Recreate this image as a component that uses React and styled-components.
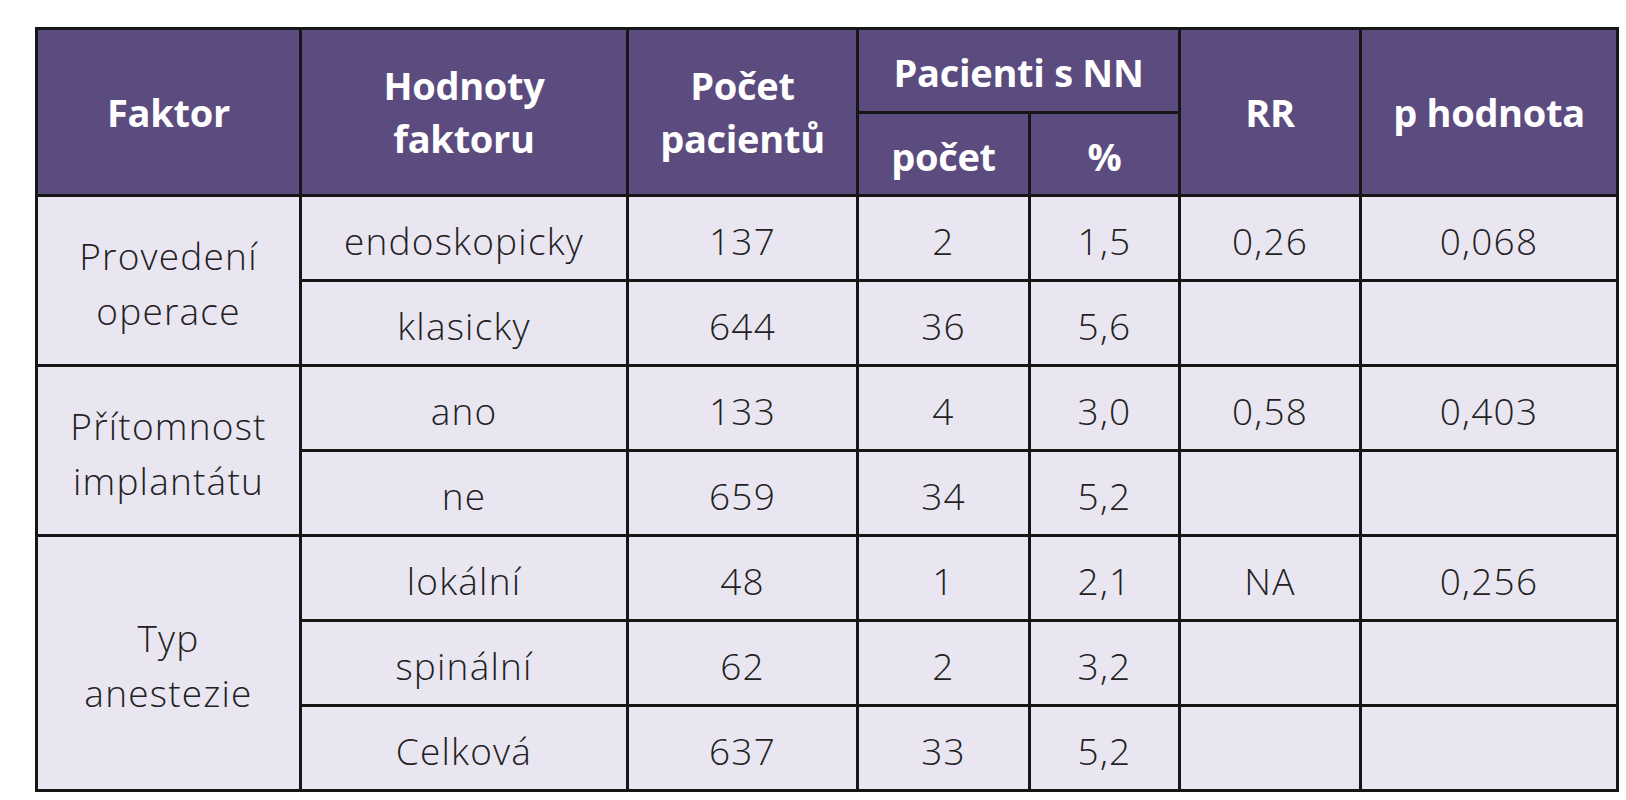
import React from "react";
import styled, { createGlobalStyle } from "styled-components";

const GlobalStyle = createGlobalStyle`
  html, body {
    margin: 0;
    padding: 0;
    background: #ffffff;
  }
`;

const Page = styled.div`
  padding: 27px 0 0 35px;
`;

const Table = styled.table`
  border-collapse: collapse;
  table-layout: fixed;
  width: 1581px;
  font-family: "Open Sans", Lato, "Liberation Sans", sans-serif;
`;

const HeadCell = styled.th`
  background: #5b4b7f;
  color: #ffffff;
  font-weight: 700;
  font-size: 38px;
  line-height: 53px;
  letter-spacing: -0.3px;
  border: 3px solid #161616;
  text-align: center;
  vertical-align: middle;
  padding: 0 4px;
  height: ${(p) => p.h || 75}px;
  padding-top: ${(p) => p.shift || 0}px;
`;

const Cell = styled.td`
  background: #e9e6f2;
  color: #222222;
  font-weight: 300;
  font-size: 37px;
  line-height: 55px;
  letter-spacing: 1.2px;
  border: 3px solid #161616;
  text-align: center;
  vertical-align: middle;
  padding: 4px 4px 0;
  height: 78px;
`;

const rows = [
  {
    factor: ["Provedení", "operace"],
    items: [
      ["endoskopicky", "137", "2", "1,5", "0,26", "0,068"],
      ["klasicky", "644", "36", "5,6", "", ""],
    ],
  },
  {
    factor: ["Přítomnost", "implantátu"],
    items: [
      ["ano", "133", "4", "3,0", "0,58", "0,403"],
      ["ne", "659", "34", "5,2", "", ""],
    ],
  },
  {
    factor: ["Typ", "anestezie"],
    items: [
      ["lokální", "48", "1", "2,1", "NA", "0,256"],
      ["spinální", "62", "2", "3,2", "", ""],
      ["Celková", "637", "33", "5,2", "", ""],
    ],
  },
];

const widths = [264, 327, 230, 172, 150, 181, 257];

export default function App() {
  return (
    <Page>
      <GlobalStyle />
      <Table>
        <colgroup>
          {widths.map((w, i) => (
            <col key={i} style={{ width: w }} />
          ))}
        </colgroup>
        <thead>
          <tr>
            <HeadCell rowSpan={2}>Faktor</HeadCell>
            <HeadCell rowSpan={2}>
              Hodnoty
              <br />
              faktoru
            </HeadCell>
            <HeadCell rowSpan={2}>
              Počet
              <br />
              pacientů
            </HeadCell>
            <HeadCell colSpan={2} h={77} shift={4}>
              Pacienti s NN
            </HeadCell>
            <HeadCell rowSpan={2}>RR</HeadCell>
            <HeadCell rowSpan={2}>p hodnota</HeadCell>
          </tr>
          <tr>
            <HeadCell h={76} shift={4}>počet</HeadCell>
            <HeadCell h={76} shift={4}>%</HeadCell>
          </tr>
        </thead>
        <tbody>
          {rows.map((group) =>
            group.items.map((item, idx) => (
              <tr key={group.factor[0] + idx}>
                {idx === 0 && (
                  <Cell rowSpan={group.items.length}>
                    {group.factor[0]}
                    <br />
                    {group.factor[1]}
                  </Cell>
                )}
                {item.map((v, j) => (
                  <Cell key={j}>{v}</Cell>
                ))}
              </tr>
            ))
          )}
        </tbody>
      </Table>
    </Page>
  );
}
